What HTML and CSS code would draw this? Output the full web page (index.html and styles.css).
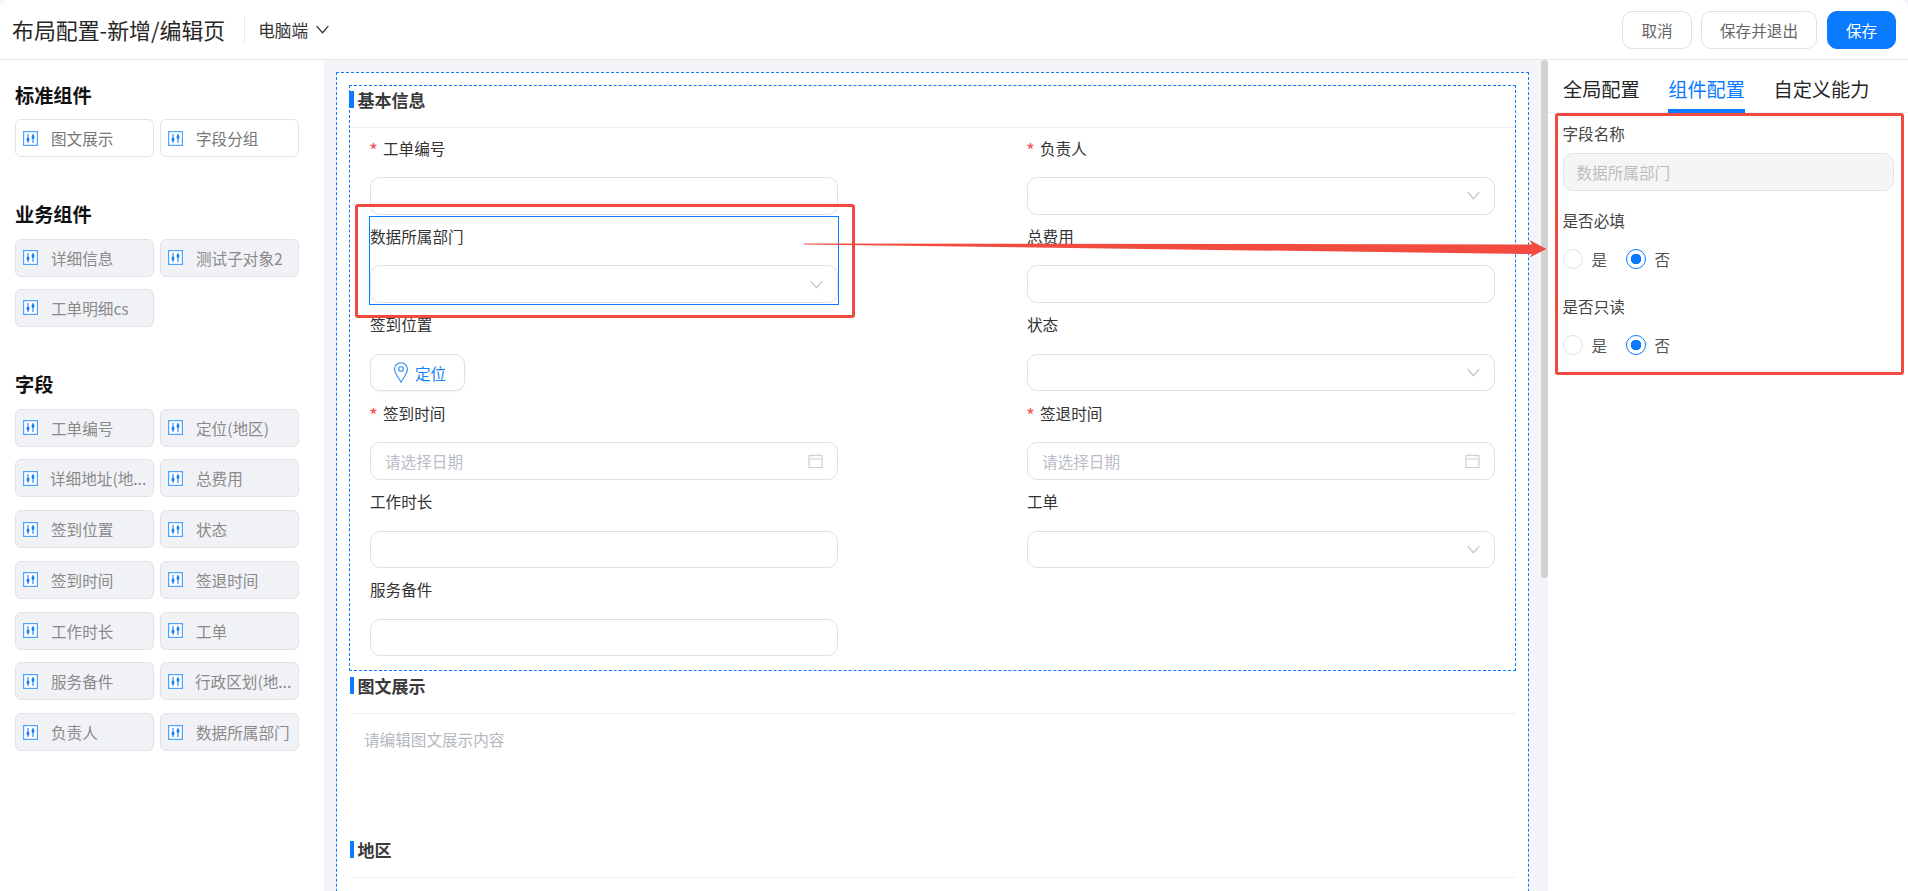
FILE: index.html
```html
<!DOCTYPE html>
<html lang="zh-CN">
<head>
<meta charset="utf-8">
<title>布局配置-新增/编辑页</title>
<link rel="stylesheet" href="styles.css">
</head>
<body>
<svg class="defs" width="0" height="0" aria-hidden="true">
  <symbol id="i-slider" viewBox="0 0 15 15">
    <rect x="0.6" y="0.6" width="13.8" height="13.8" fill="#fff" stroke="#4da3ff" stroke-width="1.2"/>
    <path d="M5 3v9M10 3v9" stroke="#1b80f5" stroke-width="1.1" fill="none"/>
    <ellipse cx="5" cy="8.6" rx="1.5" ry="2" fill="#1b80f5"/>
    <ellipse cx="10" cy="6" rx="1.5" ry="2" fill="#1b80f5"/>
  </symbol>
  <symbol id="i-chevron" viewBox="0 0 12 8">
    <path d="M0.6 0.8 6 7 11.4 0.8" fill="none" stroke="currentColor" stroke-width="1.1"/>
  </symbol>
  <symbol id="i-cal" viewBox="0 0 15 15">
    <path d="M1 2.5h13v12H1zM1 6h13M4.5 0.5v3M10.5 0.5v3" fill="none" stroke="#cfcfcf" stroke-width="1.2"/>
  </symbol>
</svg>
<div class="app">
  <header class="top">
    <div class="top-left">
      <h1 class="page-title">布局配置-新增/编辑页</h1>
      <span class="top-sep"></span>
      <span class="device">电脑端</span>
      <svg class="device-chev"><use href="#i-chevron"/></svg>
    </div>
    <div class="top-actions">
      <button class="btn btn-cancel">取消</button>
      <button class="btn btn-exit">保存并退出</button>
      <button class="btn btn-primary">保存</button>
    </div>
  </header>
  <main class="body">
    <aside class="palette">
      <section class="group">
        <h2 class="group-title">标准组件</h2>
        <div class="chips">
          <div class="chip chip-free"><svg class="chip-icon"><use href="#i-slider"/></svg><span>图文展示</span></div>
          <div class="chip chip-free"><svg class="chip-icon"><use href="#i-slider"/></svg><span>字段分组</span></div>
        </div>
      </section>
      <section class="group group-biz">
        <h2 class="group-title">业务组件</h2>
        <div class="chips">
          <div class="chip"><svg class="chip-icon"><use href="#i-slider"/></svg><span>详细信息</span></div>
          <div class="chip"><svg class="chip-icon"><use href="#i-slider"/></svg><span>测试子对象2</span></div>
          <div class="chip"><svg class="chip-icon"><use href="#i-slider"/></svg><span>工单明细cs</span></div>
        </div>
      </section>
      <section class="group group-fields">
        <h2 class="group-title">字段</h2>
        <div class="chips chips-fields">
          <div class="chip"><svg class="chip-icon"><use href="#i-slider"/></svg><span>工单编号</span></div>
          <div class="chip"><svg class="chip-icon"><use href="#i-slider"/></svg><span>定位(地区)</span></div>
          <div class="chip"><svg class="chip-icon"><use href="#i-slider"/></svg><span class="chip-long">详细地址(地...</span></div>
          <div class="chip"><svg class="chip-icon"><use href="#i-slider"/></svg><span>总费用</span></div>
          <div class="chip"><svg class="chip-icon"><use href="#i-slider"/></svg><span>签到位置</span></div>
          <div class="chip"><svg class="chip-icon"><use href="#i-slider"/></svg><span>状态</span></div>
          <div class="chip"><svg class="chip-icon"><use href="#i-slider"/></svg><span>签到时间</span></div>
          <div class="chip"><svg class="chip-icon"><use href="#i-slider"/></svg><span>签退时间</span></div>
          <div class="chip"><svg class="chip-icon"><use href="#i-slider"/></svg><span>工作时长</span></div>
          <div class="chip"><svg class="chip-icon"><use href="#i-slider"/></svg><span>工单</span></div>
          <div class="chip"><svg class="chip-icon"><use href="#i-slider"/></svg><span>服务备件</span></div>
          <div class="chip"><svg class="chip-icon"><use href="#i-slider"/></svg><span class="chip-long">行政区划(地...</span></div>
          <div class="chip"><svg class="chip-icon"><use href="#i-slider"/></svg><span>负责人</span></div>
          <div class="chip"><svg class="chip-icon"><use href="#i-slider"/></svg><span>数据所属部门</span></div>
        </div>
      </section>
    </aside>

    <div class="canvas">
      <div class="sheet">
        <section class="block block-selected">
          <div class="block-head"><span class="block-title">基本信息</span></div>
          <div class="form-grid">
            <div class="field">
              <label class="field-label"><span class="req">*</span>工单编号</label>
              <div class="control"></div>
            </div>
            <div class="field">
              <label class="field-label"><span class="req">*</span>负责人</label>
              <div class="control"><svg class="chev"><use href="#i-chevron"/></svg></div>
            </div>
            <div class="field field-active">
              <label class="field-label">数据所属部门</label>
              <div class="control"><svg class="chev"><use href="#i-chevron"/></svg></div>
            </div>
            <div class="field">
              <label class="field-label">总费用</label>
              <div class="control"></div>
            </div>
            <div class="field">
              <label class="field-label">签到位置</label>
              <button class="locate">
                <svg class="pin" viewBox="0 0 14 21"><path d="M7 .7C3.4.7.6 3.500.6 7c0 4.300 3.800 8.800 6.400 13.200C9.600 15.800 13.400 11.300 13.400 7 13.400 3.500 10.600.7 7 .7Z" fill="none" stroke="#2a8bf5" stroke-width="1.1"/><circle cx="7" cy="7" r="2.300" fill="none" stroke="#2a8bf5" stroke-width="1.1"/></svg>
                <span>定位</span>
              </button>
            </div>
            <div class="field">
              <label class="field-label">状态</label>
              <div class="control"><svg class="chev"><use href="#i-chevron"/></svg></div>
            </div>
            <div class="field">
              <label class="field-label"><span class="req">*</span>签到时间</label>
              <div class="control"><span class="placeholder">请选择日期</span><svg class="cal"><use href="#i-cal"/></svg></div>
            </div>
            <div class="field">
              <label class="field-label"><span class="req">*</span>签退时间</label>
              <div class="control"><span class="placeholder">请选择日期</span><svg class="cal"><use href="#i-cal"/></svg></div>
            </div>
            <div class="field">
              <label class="field-label">工作时长</label>
              <div class="control"></div>
            </div>
            <div class="field">
              <label class="field-label">工单</label>
              <div class="control"><svg class="chev"><use href="#i-chevron"/></svg></div>
            </div>
            <div class="field">
              <label class="field-label">服务备件</label>
              <div class="control"></div>
            </div>
          </div>
        </section>
        <section class="block block-plain">
          <div class="block-head"><span class="block-title">图文展示</span></div>
          <p class="rich-hint">请编辑图文展示内容</p>
        </section>
        <section class="block block-plain block-last">
          <div class="block-head"><span class="block-title">地区</span></div>
        </section>
      </div>
      <div class="scroll-thumb"></div>
    </div>

    <aside class="config">
      <nav class="tabs">
        <span class="tab">全局配置</span>
        <span class="tab tab-active">组件配置</span>
        <span class="tab">自定义能力</span>
      </nav>
      <div class="config-form">
        <div class="cfg-label">字段名称</div>
        <div class="cfg-input">数据所属部门</div>
        <div class="cfg-label cfg-gap1">是否必填</div>
        <div class="radios">
          <span class="radio"></span><span class="radio-text">是</span>
          <span class="radio radio-on"></span><span class="radio-text">否</span>
        </div>
        <div class="cfg-label cfg-gap2">是否只读</div>
        <div class="radios">
          <span class="radio"></span><span class="radio-text">是</span>
          <span class="radio radio-on"></span><span class="radio-text">否</span>
        </div>
      </div>
    </aside>
  </main>

  <div class="mark mark-field"></div>
  <div class="mark mark-config"></div>
  <svg class="mark-arrow" viewBox="0 0 1908 891" aria-hidden="true">
    <polygon points="804,243.600 1532,244.400 1529.500,240 1546.500,249 1529.500,257.500 1532,254 804,244.600" fill="#f24c40"/>
  </svg>
</div>
</body>
</html>
```

FILE: styles.css
```css
* { box-sizing: border-box; }
html, body { margin: 0; height: 891px; overflow: hidden; background: #f3f5f9; }
body {
  font-family: "Noto Sans CJK SC", "Noto Sans", sans-serif;
  font-size: 15.6px;
  color: #333;
}
.defs { position: absolute; }

.app {
  position: relative;
  width: 1908px;
  height: 891px;
  display: flex;
  flex-direction: column;
  background: #fff;
  border-radius: 9px 9px 0 0;
  overflow: hidden;
}

/* top bar */
.top {
  flex: none;
  height: 60px;
  display: flex;
  justify-content: space-between;
  align-items: center;
  padding: 0 12px;
  border-bottom: 1px solid #e9e9ec;
}
.top-left { display: flex; align-items: center; }
.page-title { margin: 0; font-size: 21.9px; font-weight: 400; color: #262626; line-height: 30px; white-space: nowrap; }
.top-sep { width: 1px; height: 28px; background: #ebebee; margin: 0 13px 0 19px; }
.device { font-size: 16.67px; color: #333; line-height: 24px; }
.device-chev { width: 13px; height: 9px; margin: 0 0 0 8px; color: #333; }
.top-actions { display: flex; align-items: center; gap: 9px; }
.btn {
  height: 38px;
  border: 1px solid #dfe1e6;
  border-radius: 10px;
  background: #fff;
  color: #666;
  font: inherit;
  font-size: 15.6px;
  padding: 0;
}
.btn-cancel { width: 70px; }
.btn-exit { width: 116px; }
.btn-primary { width: 69px; margin-left: 1px; background: #0a7aff; border-color: #0a7aff; color: #fff; }

/* layout */
.body { flex: 1; min-height: 0; display: flex; }

/* palette */
.palette { flex: none; width: 324px; padding: 21.5px 25px 0 15px; background: #fff; }
.group-biz { margin-top: 44px; }
.group-fields { margin-top: 44.5px; }
.group-title { margin: 0 0 11.5px; font-size: 19.2px; font-weight: 700; line-height: 26px; color: #111; }
.chips { display: grid; grid-template-columns: 139px 139px; column-gap: 6px; row-gap: 12px; }
.chips-fields { row-gap: 12.8px; }
.chip {
  height: 38px;
  display: flex;
  align-items: center;
  padding-left: 7px;
  border: 1px solid #e1e3e8;
  border-radius: 6px;
  background: #f1f2f6;
  color: #8a8a8a;
  white-space: nowrap;
  overflow: hidden;
}
.chip-free { background: #fff; color: #777; }
.chip-icon { flex: none; width: 15px; height: 15px; margin-right: 13px; }
.chip-long { margin-left: -1px; }

/* canvas */
.canvas { position: relative; flex: none; width: 1224px; height: 831px; padding: 12px 0 0 12px; background: #f3f5f9; overflow: hidden; }
.sheet {
  width: 1193px;
  height: 900px;
  padding: 12px 0 0 12px;
  background: #fff;
  border: 1px dashed #0a7aff;
  border-bottom: 0;
}
.scroll-thumb { position: absolute; top: 0; right: 0; width: 7px; height: 518px; background: #d2d2d2; border-radius: 3.500px; }

.block-selected { width: 1167px; border: 1px dashed #0a7aff; padding-bottom: 11.6px; }
.block-plain { width: 1165px; margin-left: 1px; }
.block-selected + .block-plain { margin-top: 1px; }
.block-head {
  height: 42px;
  padding-top: 5px;
  border-bottom: 1px solid #eeeff2;
}
.block-title {
  display: block;
  height: 17px;
  padding-left: 3.5px;
  border-left: 4px solid #0a7aff;
  font-size: 17px;
  font-weight: 700;
  line-height: 17px;
  color: #3a3a3a;
}
.block-selected .block-title { margin-left: -1px; border-left-width: 5px; }

.form-grid {
  display: grid;
  grid-template-columns: 467.5px 467.5px;
  column-gap: 189.5px;
  padding-left: 20px;
}
.field { position: relative; height: 88.400px; padding-top: 8.5px; }
.field-active::after {
  content: "";
  position: absolute;
  inset: 0 -1px;
  border: 1px solid #0a7aff;
  pointer-events: none;
}
.field-label { display: block; height: 22px; line-height: 22px; color: #333; white-space: nowrap; }
.req { display: inline-block; width: 14px; margin-left: -1px; font-size: 19px; line-height: 0; vertical-align: -3px; color: #f2555a; }
.control {
  position: relative;
  height: 37.500px;
  margin-top: 18.5px;
  display: flex;
  align-items: center;
  justify-content: space-between;
  padding: 0 14px;
  border: 1px solid #dfe0e5;
  border-radius: 10px;
  background: #fff;
}
.placeholder { color: #b9bdc5; }
.chev { width: 13px; height: 9px; margin-left: auto; color: #c4c4c4; }
.cal { width: 15px; height: 15px; margin-left: auto; }
.locate {
  display: flex;
  align-items: center;
  justify-content: center;
  gap: 7px;
  width: 95px;
  height: 37.500px;
  margin-top: 18.5px;
  padding: 0 0 0 5px;
  border: 1px solid #dfe0e5;
  border-radius: 10px;
  background: #fff;
  box-shadow: 0 1px 2px rgba(0, 0, 0, .05);
  color: #1a82f7;
  font: inherit;
}
.pin { width: 14px; height: 21px; }
.rich-hint { margin: 0; padding: 13px 0 0 14px; height: 122px; line-height: 24px; color: #b4b8bf; }

/* config panel */
.config { flex: 1; min-width: 0; background: #fff; }
.tabs {
  height: 53px;
  display: flex;
  gap: 28.5px;
  padding-left: 15px;
  border-bottom: 1px solid #eeeff2;
}
.tab { height: 53px; padding-top: 15px; font-size: 19.2px; line-height: 28px; color: #262626; white-space: nowrap; }
.tab-active { color: #0a7aff; border-bottom: 4px solid #0a7aff; }
.config-form { padding: 9px 14px 0 14.500px; }
.cfg-label { height: 22px; line-height: 22px; color: #444; }
.cfg-input {
  height: 38px;
  margin-top: 9px;
  padding-left: 13px;
  line-height: 36px;
  border: 1px solid #e2e3e7;
  border-radius: 10px;
  background: #f5f5f5;
  color: #bdbdbd;
}
.cfg-gap1 { margin-top: 18px; }
.cfg-gap2 { margin-top: 26px; }
.radios { display: flex; align-items: center; height: 20px; margin-top: 18px; }
.radio { width: 20px; height: 20px; border: 1px solid #dfe0e5; border-radius: 50%; background: #fff; }
.radio-on { border-color: #0a7aff; background: radial-gradient(circle, #0a7aff 0 5px, #fff 5.500px); }
.radio-text { margin: 0 18.500px 0 9px; line-height: 20px; color: #555; }

/* annotations drawn over the screenshot */
.mark { position: absolute; border: 3px solid #f04a40; border-radius: 3px; pointer-events: none; }
.mark-field { left: 355px; top: 204px; width: 500px; height: 114px; }
.mark-config { left: 1555px; top: 113px; width: 349px; height: 262px; }
.mark-arrow { position: absolute; left: 0; top: 0; width: 1908px; height: 891px; pointer-events: none; }
```
